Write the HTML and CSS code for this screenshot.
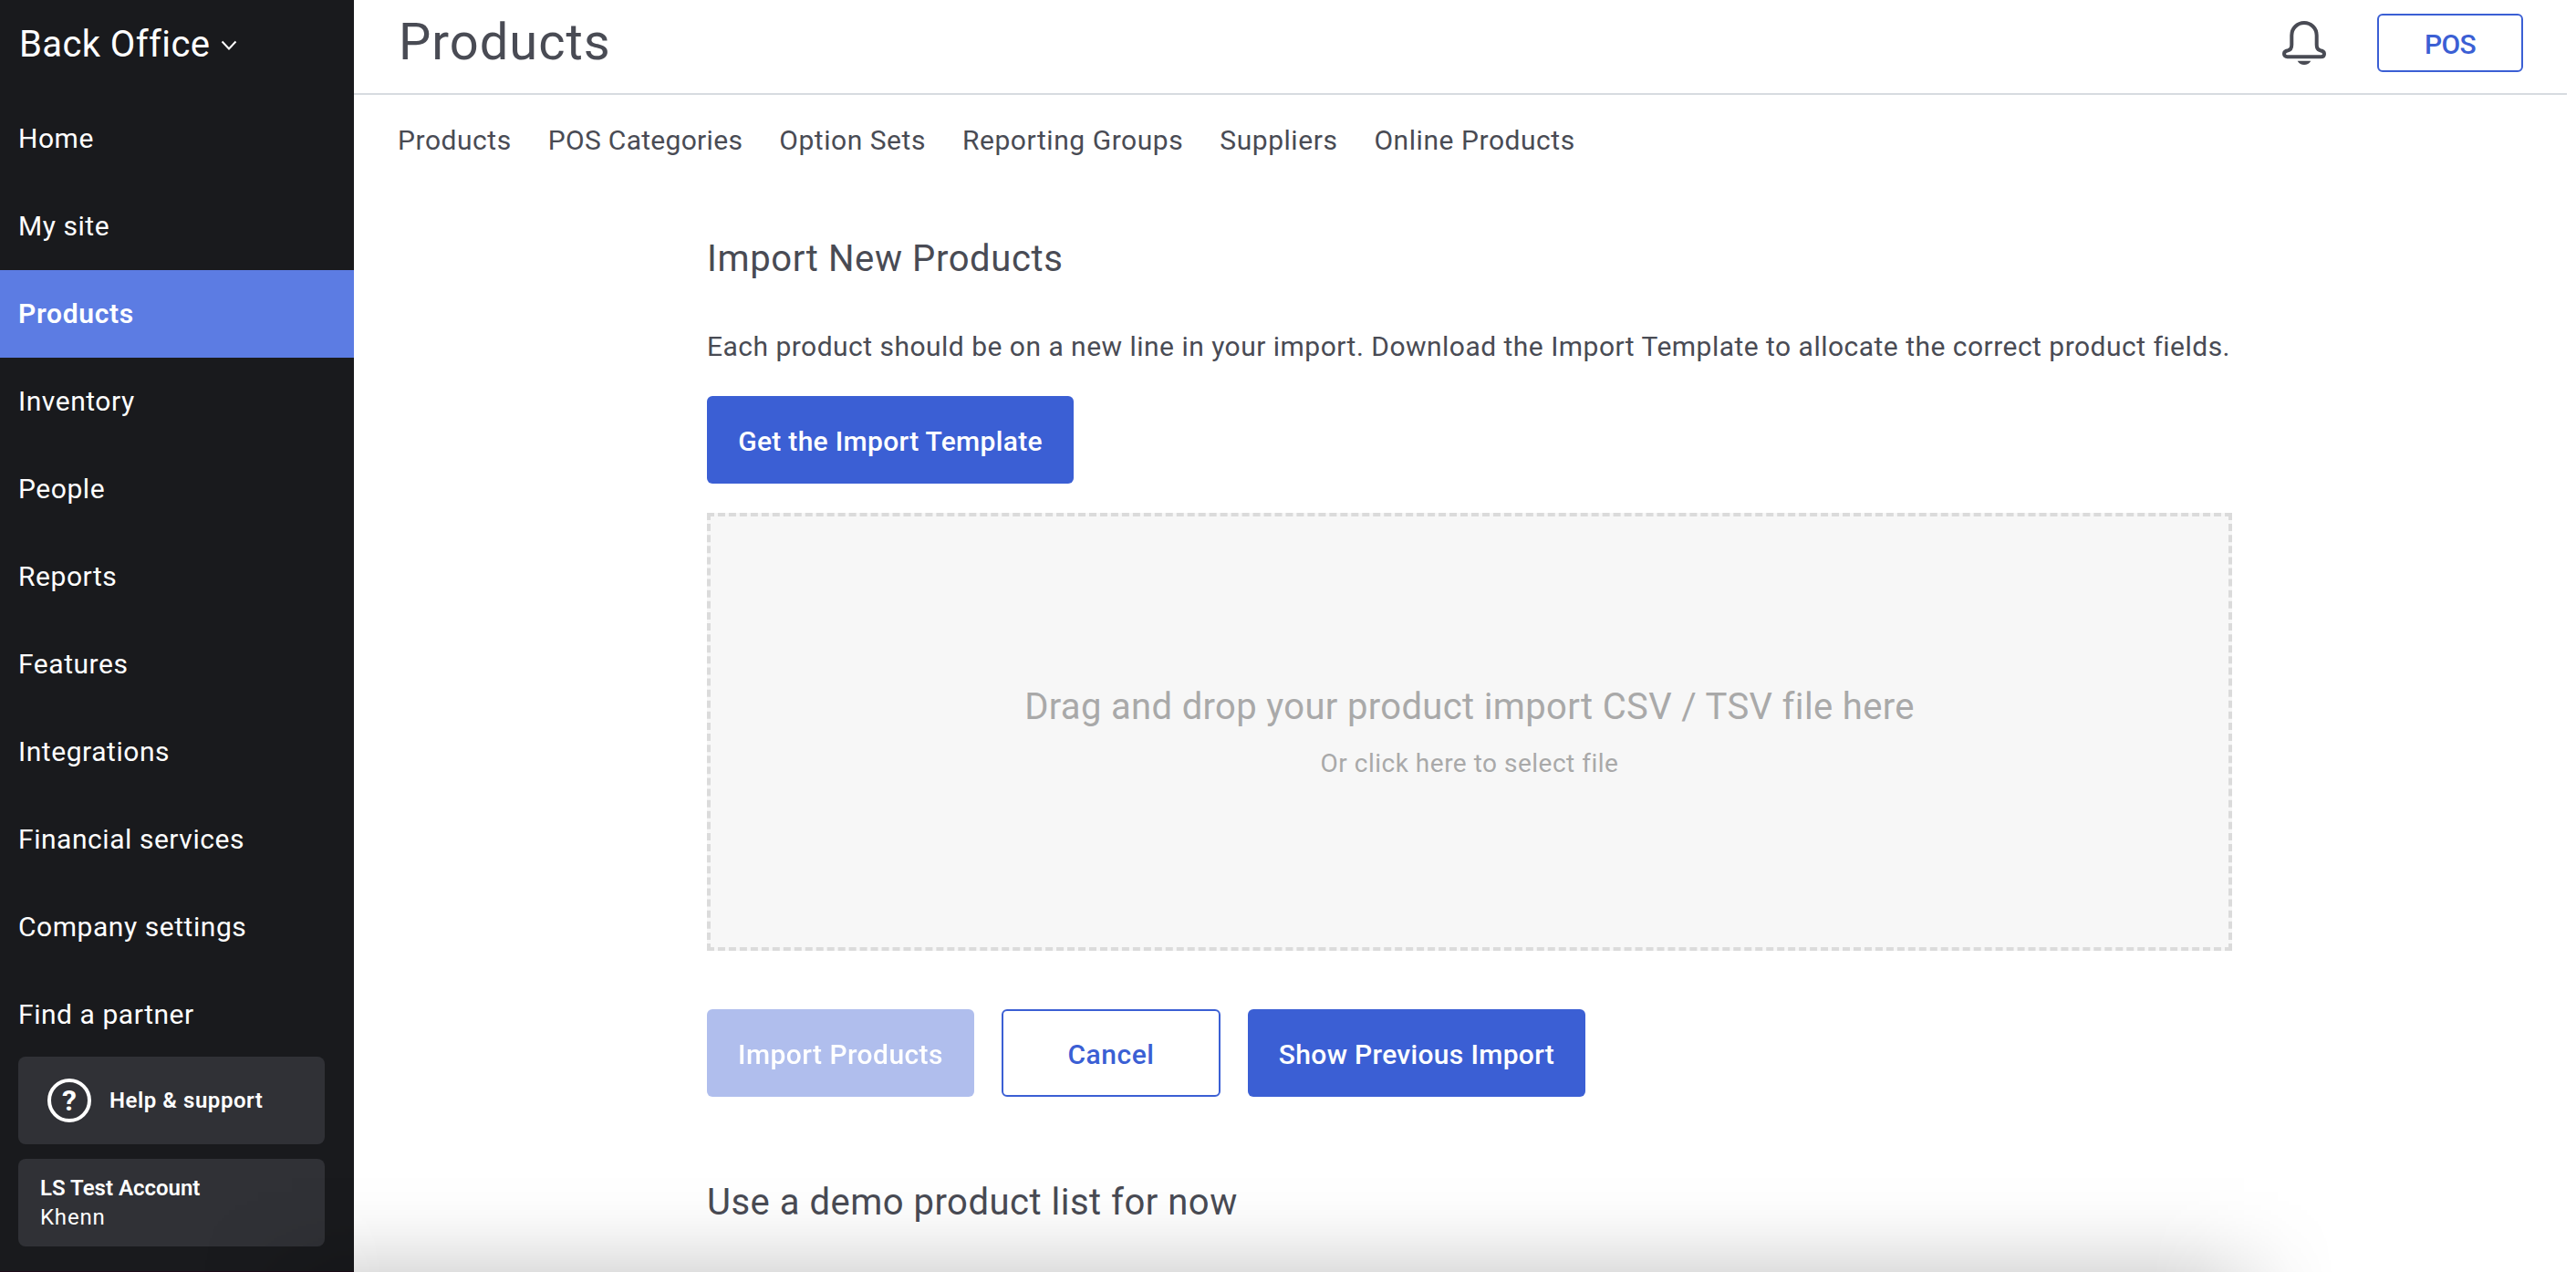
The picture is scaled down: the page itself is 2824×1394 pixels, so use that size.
FILE: index.html
```
<!DOCTYPE html>
<html lang="en">
<head>
  <meta charset="UTF-8">
  <meta name="viewport" content="width=device-width, initial-scale=1.0">
  <title>Products - Back Office</title>
  <link rel="stylesheet" href="styles.css">
</head>
<body>
  <!-- Sidebar -->
  <aside class="sidebar">
    <div class="brand">
      <span>Back Office</span>
      <svg class="chevron" viewBox="0 0 18 12" fill="none" stroke="currentColor" stroke-width="2">
        <path d="M1.5 1.5 9 9.5l7.5-8"/>
      </svg>
    </div>

    <nav class="menu">
      <a class="menu-item" href="#">Home</a>
      <a class="menu-item" href="#">My site</a>
      <a class="menu-item active" href="#">Products</a>
      <a class="menu-item" href="#">Inventory</a>
      <a class="menu-item" href="#">People</a>
      <a class="menu-item" href="#">Reports</a>
      <a class="menu-item" href="#">Features</a>
      <a class="menu-item" href="#">Integrations</a>
      <a class="menu-item" href="#">Financial services</a>
      <a class="menu-item" href="#">Company settings</a>
      <a class="menu-item" href="#">Find a partner</a>
    </nav>

    <div class="sidebar-cards">
      <a class="card help" href="#">
        <span class="help-icon">?</span>
        <span class="help-label">Help &amp; support</span>
      </a>
      <div class="card account">
        <strong class="account-name">LS Test Account</strong>
        <span class="account-user">Khenn</span>
      </div>
    </div>
  </aside>

  <!-- Main area -->
  <main class="main">
    <header class="header">
      <h1>Products</h1>
      <div class="header-actions">
        <svg class="bell" viewBox="0 0 48 48">
          <path fill="none" stroke="currentColor" stroke-width="4" stroke-linejoin="round" d="M10.3 15.7a13.7 13.7 0 0 1 27.4 0V26c0 3.6 1 5.6 4 6.3 2.7.5 4.3 1.6 4.3 3.6 0 2-1.4 3.3-3.6 3.3H5.6C3.4 39.2 2 37.9 2 35.9c0-2 1.6-3.1 4.3-3.6 3-.7 4-2.7 4-6.3z"/>
          <path fill="currentColor" d="M16.7 43.7h14.6c-1.7 2.9-4.2 4.3-7.3 4.3s-5.600-1.400-7.300-4.300z"/>
        </svg>
        <button class="btn-pos">POS</button>
      </div>
    </header>

    <nav class="tabs">
      <a class="tab" href="#">Products</a>
      <a class="tab tab-pos" href="#">POS Categories</a>
      <a class="tab" href="#">Option Sets</a>
      <a class="tab" href="#">Reporting Groups</a>
      <a class="tab" href="#">Suppliers</a>
      <a class="tab" href="#">Online Products</a>
    </nav>

    <section class="content">
      <h2>Import New Products</h2>
      <p class="intro">Each product should be on a new line in your import. Download the Import Template to allocate the correct product fields.</p>
      <button class="btn btn-template">Get the Import Template</button>

      <div class="dropzone">
        <div class="drop-title">Drag and drop your product import CSV / TSV file here</div>
        <div class="drop-hint">Or click here to select file</div>
      </div>

      <div class="actions">
        <button class="btn btn-import" disabled>Import Products</button>
        <button class="btn btn-cancel">Cancel</button>
        <button class="btn btn-previous">Show Previous Import</button>
      </div>

      <h2 class="demo-title">Use a demo product list for now</h2>
    </section>
  </main>

  <div class="bottom-shadow"></div>
</body>
</html>
```
FILE: styles.css
```
/* General reset */
* {
  margin: 0;
  padding: 0;
  box-sizing: border-box;
}

body {
  font-family: Roboto, "Liberation Sans", sans-serif;
  font-size: 30px;
  letter-spacing: 0.55px;
  color: #494b54;
  background: #fff;
  height: 100vh;
  display: flex;
  overflow: hidden;
}

a {
  color: inherit;
  text-decoration: none;
}

button {
  font: inherit;
  letter-spacing: inherit;
  cursor: pointer;
}

/* Sidebar */
.sidebar {
  width: 388px;
  flex-shrink: 0;
  background: #191a1d;
  border-bottom: 1px solid #1d0b19;
  color: #fff;
}

.brand {
  display: flex;
  align-items: center;
  gap: 12px;
  height: 96px;
  margin-bottom: 8px;
  padding-left: 21px;
  font-size: 40px;
  letter-spacing: 0.4px;
}

.chevron {
  width: 18px;
  height: 12px;
  margin-top: 4px;
}

.menu {
  display: flex;
  flex-direction: column;
}

.menu-item {
  height: 96px;
  line-height: 96px;
  padding-left: 20px;
}

.menu-item.active {
  background: #5c7ce3;
  font-weight: 600;
  letter-spacing: 0.7px;
}

.sidebar-cards {
  display: flex;
  flex-direction: column;
  gap: 16px;
  margin-top: -2px;
  padding: 0 32px 0 20px;
  font-size: 24px;
}

.card {
  display: flex;
  height: 96px;
  background: #303136;
  border-radius: 8px;
}

.help {
  align-items: center;
  gap: 20px;
  padding-left: 32px;
}

.help-label {
  font-weight: 600;
}

.help-icon {
  display: flex;
  align-items: center;
  justify-content: center;
  width: 48px;
  height: 48px;
  border: 4px solid #fff;
  border-radius: 50%;
  font-size: 32px;
  font-weight: 700;
  letter-spacing: 0;
}

.account {
  flex-direction: column;
  justify-content: center;
  padding-left: 24px;
  line-height: 32px;
}

.account-name {
  font-weight: 600;
  letter-spacing: 0;
}

.account-user {
  letter-spacing: 0.8px;
}

/* Main area */
.main {
  flex: 1;
  margin-right: 10px;
}

.header {
  display: flex;
  align-items: center;
  justify-content: space-between;
  height: 104px;
  padding: 0 48px 8px 49px;
  border-bottom: 2px solid #d7dbe0;
}

h1 {
  padding-bottom: 3px;
  font-size: 56px;
  font-weight: 400;
  letter-spacing: 1px;
}

.header-actions {
  display: flex;
  align-items: center;
  gap: 56px;
}

.bell {
  width: 48px;
  height: 48px;
}

.btn-pos {
  width: 160px;
  height: 64px;
  padding-top: 2px;
  background: #fff;
  border: 2px solid #3b5fd4;
  border-radius: 6px;
  color: #3b5fd4;
  font-weight: 500;
  letter-spacing: -0.6px;
}

.tabs {
  display: flex;
  gap: 40px;
  padding: 34px 0 0 48px;
  line-height: 32px;
}

.tab-pos {
  letter-spacing: 0.3px;
}

.content {
  width: 1672px;
  margin: 90px 0 0 387px;
}

h2 {
  font-size: 40px;
  font-weight: 400;
  line-height: 48px;
  letter-spacing: 0.6px;
}

.intro {
  margin: 48px 0 30px;
  line-height: 48px;
  letter-spacing: 0.48px;
  white-space: nowrap;
}

.btn {
  height: 96px;
  padding-top: 2px;
  background: #3b5fd4;
  border: 0;
  border-radius: 6px;
  color: #fff;
  font-weight: 500;
}

.btn-template {
  display: block;
  width: 402px;
  letter-spacing: 0.31px;
}

.dropzone {
  display: flex;
  flex-direction: column;
  align-items: center;
  justify-content: center;
  gap: 18px;
  height: 480px;
  margin: 32px 0 64px;
  padding-top: 4px;
  background: #f7f7f7;
  border: 4px dashed #dbdbdb;
  color: #a9a9a9;
}

.drop-title {
  font-size: 40px;
  line-height: 48px;
  letter-spacing: 0.34px;
}

.drop-hint {
  font-size: 28px;
  line-height: 40px;
  letter-spacing: 0.5px;
}

.actions {
  display: flex;
  gap: 30px;
}

.btn-import {
  width: 293px;
  opacity: 0.4;
  letter-spacing: 0.43px;
}

.btn-cancel {
  width: 240px;
  background: #fff;
  border: 2px solid #3b5fd4;
  color: #3b5fd4;
}

.btn-previous {
  width: 370px;
  letter-spacing: 0.32px;
}

.demo-title {
  margin-top: 92px;
  letter-spacing: 0.5px;
}

/* Soft shadow rising from the bottom edge */
.bottom-shadow {
  position: absolute;
  bottom: 0;
  left: 220px;
  width: 2340px;
  height: 110px;
  background: linear-gradient(to top,
    rgba(0, 0, 0, 0.125) 0,
    rgba(0, 0, 0, 0.085) 20px,
    rgba(0, 0, 0, 0.05) 40px,
    rgba(0, 0, 0, 0.024) 60px,
    rgba(0, 0, 0, 0.009) 80px,
    transparent 110px);
  mask-image: linear-gradient(to right,
    transparent 0,
    rgba(0, 0, 0, 0.16) 50px,
    rgba(0, 0, 0, 0.5) 100px,
    rgba(0, 0, 0, 0.84) 150px,
    #000 200px,
    #000 calc(100% - 200px),
    rgba(0, 0, 0, 0.84) calc(100% - 150px),
    rgba(0, 0, 0, 0.5) calc(100% - 100px),
    rgba(0, 0, 0, 0.16) calc(100% - 50px),
    transparent 100%);
  pointer-events: none;
}
```
